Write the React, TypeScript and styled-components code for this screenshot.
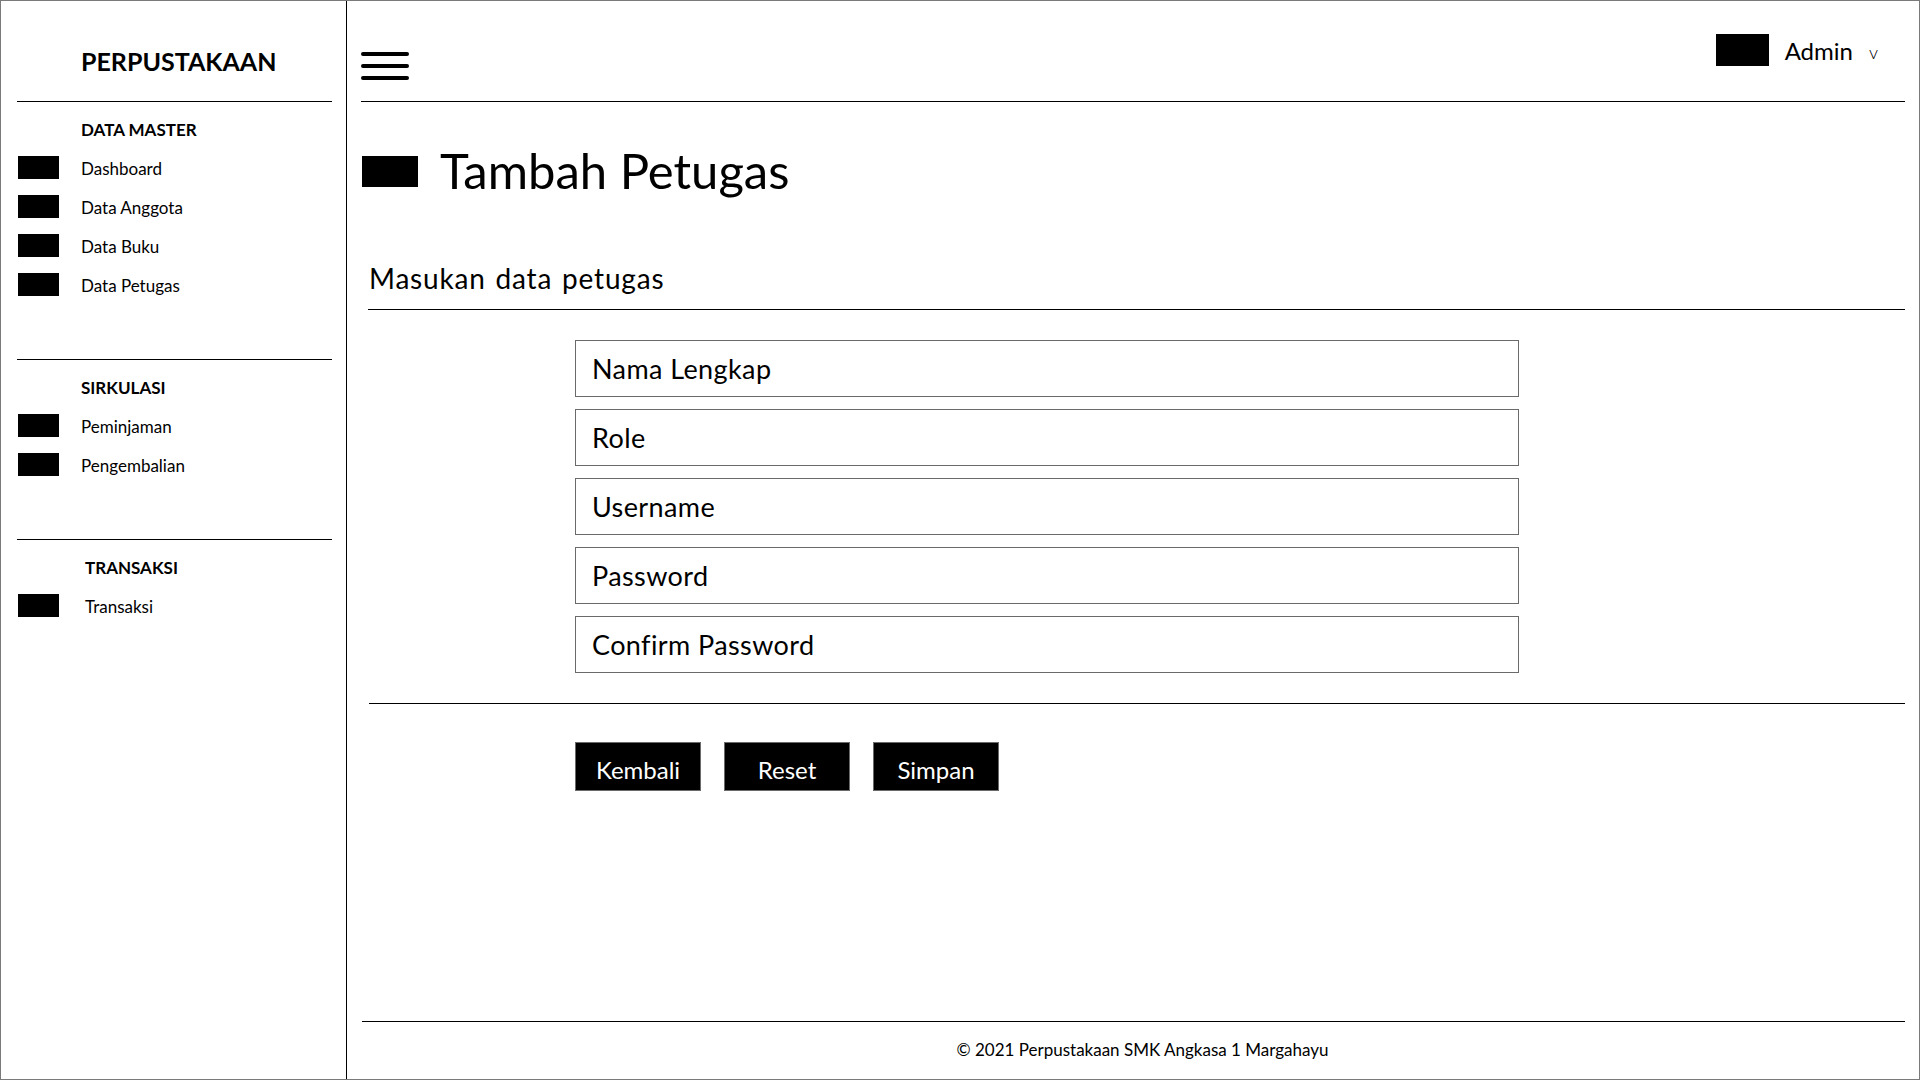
import React from "react";
import styled, { createGlobalStyle } from "styled-components";

const GlobalStyle = createGlobalStyle`
  html, body {
    margin: 0;
    padding: 0;
    background: #ffffff;
  }
  body {
    font-family: Lato, "Open Sans", "Noto Sans", sans-serif;
    color: #000000;
  }
  * { box-sizing: border-box; }
`;

const Frame = styled.div`
  width: 1920px;
  height: 1080px;
  border: 1px solid #7a7a7a;
  display: flex;
  background: #ffffff;
  overflow: hidden;
`;

/* ---------- Sidebar ---------- */

const Sidebar = styled.aside`
  width: 346px;
  flex-shrink: 0;
  border-right: 1px solid #000000;
  display: flex;
  flex-direction: column;
`;

const Brand = styled.div`
  height: 100px;
  padding: 48px 0 0 80px;
  font-size: 25px;
  line-height: 25px;
  font-weight: 700;
`;

const Section = styled.section`
  margin-left: 16px;
  width: 315px;
  border-top: 1px solid #000000;
  padding-bottom: 55px;
`;

const SectionTitle = styled.h3<{ $indent: number }>`
  margin: 18px 0 8px 0;
  padding-left: ${(p) => p.$indent}px;
  font-size: 17px;
  line-height: 20px;
  font-weight: 700;
`;

const NavItem = styled.a<{ $gap: number }>`
  display: flex;
  align-items: center;
  height: 39px;
  color: #000000;
  text-decoration: none;
  font-size: 17px;
  font-weight: 400;
  gap: ${(p) => p.$gap}px;
  cursor: pointer;
`;

const NavLabel = styled.span`
  padding-top: 1px;
`;

const NavIcon = styled.span`
  display: block;
  width: 41px;
  height: 23px;
  margin-left: 1px;
  background: #000000;
`;

/* ---------- Main ---------- */

const Main = styled.main`
  flex: 1;
  display: flex;
  flex-direction: column;
  padding: 0 14px 0 14px;
  min-width: 0;
`;

const Header = styled.header`
  height: 101px;
  border-bottom: 1px solid #000000;
  display: flex;
  justify-content: space-between;
  align-items: flex-start;
`;

const MenuButton = styled.button`
  margin-top: 51px;
  padding: 0;
  border: 0;
  background: transparent;
  width: 48px;
  display: flex;
  flex-direction: column;
  gap: 8px;
  cursor: pointer;
`;

const MenuBar = styled.span`
  display: block;
  width: 48px;
  height: 4px;
  border-radius: 2px;
  background: #000000;
`;

const UserBox = styled.div`
  margin-top: 33px;
  margin-right: 27px;
  display: flex;
  align-items: center;
  height: 32px;
`;

const Avatar = styled.span`
  display: block;
  width: 53px;
  height: 32px;
  background: #000000;
`;

const UserName = styled.span`
  margin-left: 16px;
  font-size: 24px;
  line-height: 32px;
  padding-top: 2px;
`;

const Caret = styled.span`
  margin-left: 16px;
  font-size: 18px;
  font-weight: 300;
  line-height: 32px;
  padding-top: 4px;
`;

const TitleRow = styled.div`
  margin-top: 43px;
  height: 50px;
  display: flex;
  align-items: center;
`;

const TitleIcon = styled.span`
  display: block;
  width: 56px;
  height: 31px;
  margin-left: 1px;
  margin-top: 2px;
  background: #000000;
`;

const PageTitle = styled.h1`
  margin: 0 0 0 22px;
  font-size: 49px;
  line-height: 50px;
  font-weight: 400;
`;

const SubTitle = styled.h2`
  margin: 66px 0 0 7px;
  padding: 0 0 14px 1px;
  border-bottom: 1px solid #000000;
  font-size: 28px;
  line-height: 34px;
  font-weight: 400;
  letter-spacing: 0.8px;
  word-spacing: 2px;
`;

const Form = styled.form`
  margin: 30px 0 0 214px;
  display: flex;
  flex-direction: column;
  gap: 12px;
`;

const Field = styled.input`
  width: 944px;
  height: 57px;
  border: 1px solid #6a6a6a;
  padding: 0 0 0 16px;
  font-family: Lato, "Open Sans", sans-serif;
  font-size: 27px;
  letter-spacing: 0.4px;
  color: #000000;
  background: #ffffff;
  outline: none;
  &::placeholder {
    color: #000000;
    opacity: 1;
  }
`;

const Rule = styled.hr`
  margin: 30px 0 0 8px;
  border: 0;
  border-top: 1px solid #000000;
  height: 0;
`;

const Actions = styled.div`
  margin: 38px 0 0 214px;
  display: flex;
  gap: 23px;
`;

const ActionButton = styled.button`
  width: 126px;
  height: 49px;
  background: #000000;
  border: 1px solid #6a6a6a;
  color: #ffffff;
  font-family: Lato, "Open Sans", sans-serif;
  font-size: 24px;
  padding: 5px 0 0 0;
  cursor: pointer;
`;

const Footer = styled.footer`
  margin-top: auto;
  margin-left: 1px;
  height: 58px;
  border-top: 1px solid #000000;
  padding: 18px 0 0 18px;
  text-align: center;
  font-size: 17px;
  line-height: 20px;
`;

type NavEntry = { label: string };
type NavGroup = { title: string; indent: number; gap: number; items: NavEntry[] };

const groups: NavGroup[] = [
  {
    title: "DATA MASTER",
    indent: 64,
    gap: 22,
    items: [
      { label: "Dashboard" },
      { label: "Data Anggota" },
      { label: "Data Buku" },
      { label: "Data Petugas" },
    ],
  },
  {
    title: "SIRKULASI",
    indent: 64,
    gap: 22,
    items: [{ label: "Peminjaman" }, { label: "Pengembalian" }],
  },
  {
    title: "TRANSAKSI",
    indent: 68,
    gap: 26,
    items: [{ label: "Transaksi" }],
  },
];

const fields = ["Nama Lengkap", "Role", "Username", "Password", "Confirm Password"];

export default function App() {
  return (
    <>
      <GlobalStyle />
      <Frame>
        <Sidebar>
          <Brand>PERPUSTAKAAN</Brand>
          {groups.map((g) => (
            <Section key={g.title}>
              <SectionTitle $indent={g.indent}>{g.title}</SectionTitle>
              {g.items.map((it) => (
                <NavItem key={it.label} $gap={g.gap}>
                  <NavIcon />
                  <NavLabel>{it.label}</NavLabel>
                </NavItem>
              ))}
            </Section>
          ))}
        </Sidebar>
        <Main>
          <Header>
            <MenuButton type="button" aria-label="Menu">
              <MenuBar />
              <MenuBar />
              <MenuBar />
            </MenuButton>
            <UserBox>
              <Avatar />
              <UserName>Admin</UserName>
              <Caret>v</Caret>
            </UserBox>
          </Header>
          <TitleRow>
            <TitleIcon />
            <PageTitle>Tambah Petugas</PageTitle>
          </TitleRow>
          <SubTitle>Masukan data petugas</SubTitle>
          <Form onSubmit={(e) => e.preventDefault()}>
            {fields.map((f) => (
              <Field
                key={f}
                type={f.includes("Password") ? "password" : "text"}
                placeholder={f}
              />
            ))}
          </Form>
          <Rule />
          <Actions>
            <ActionButton type="button">Kembali</ActionButton>
            <ActionButton type="button">Reset</ActionButton>
            <ActionButton type="button">Simpan</ActionButton>
          </Actions>
          <Footer>© 2021 Perpustakaan SMK Angkasa 1 Margahayu</Footer>
        </Main>
      </Frame>
    </>
  );
}
